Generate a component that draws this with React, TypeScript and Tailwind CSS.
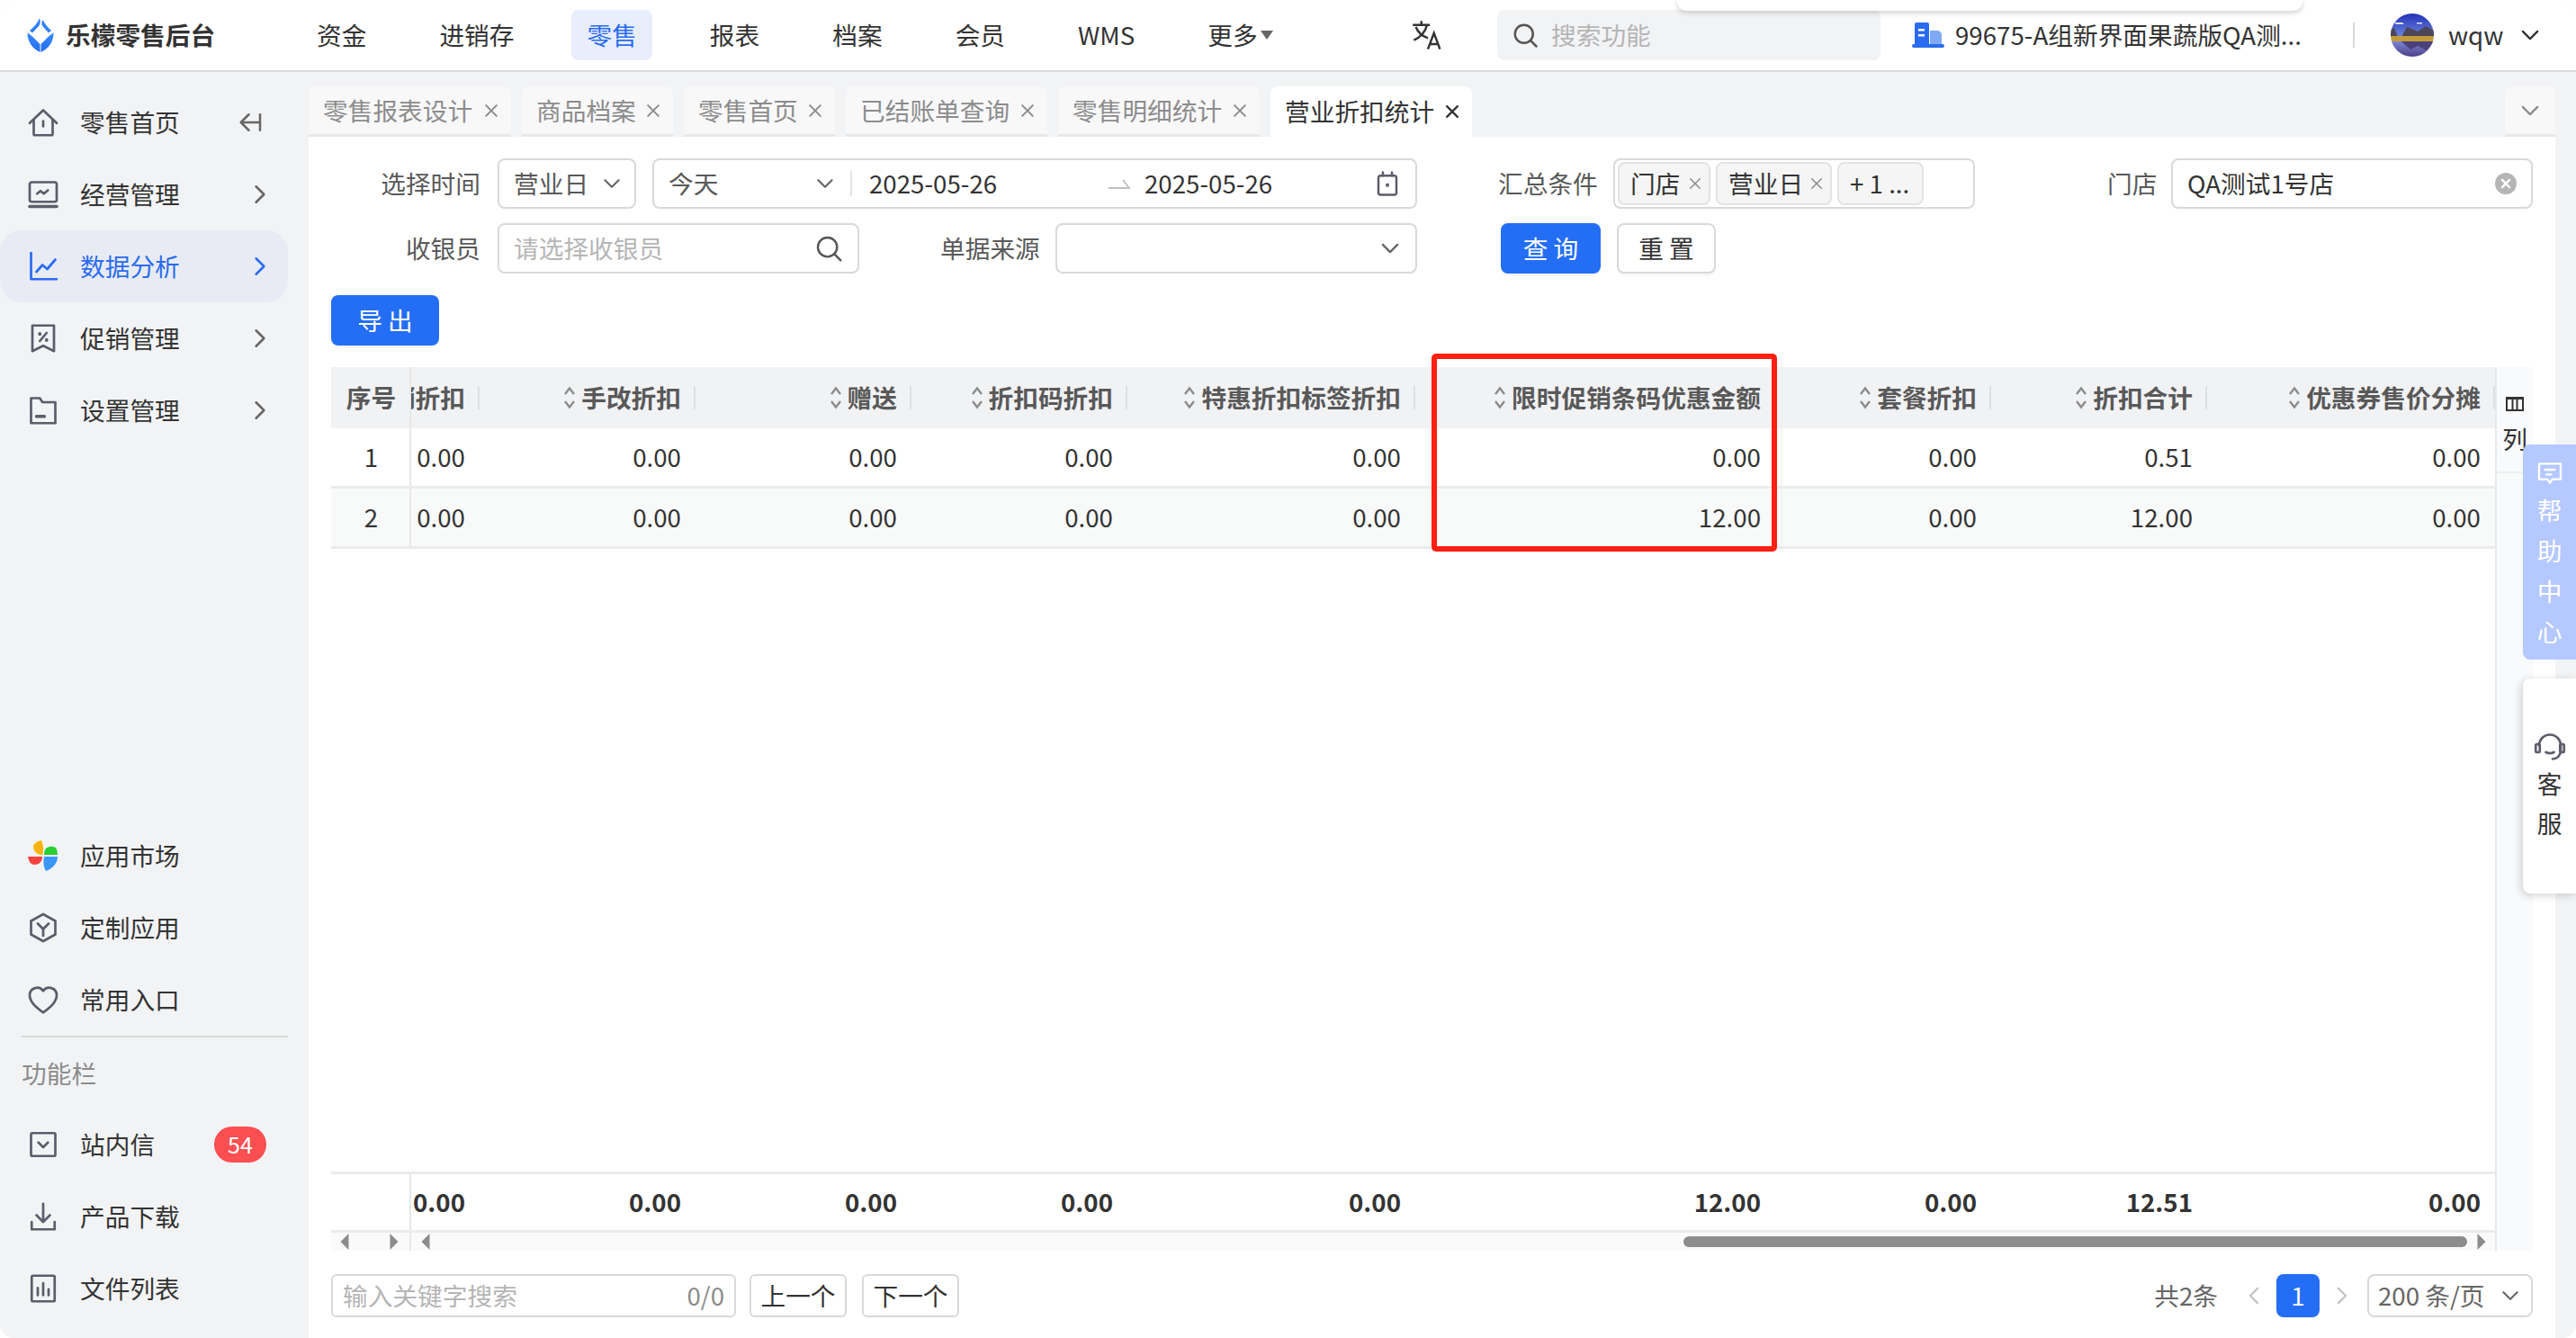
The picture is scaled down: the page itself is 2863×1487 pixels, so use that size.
import type { ReactNode } from "react";

const gridCols = "grid grid-cols-[89px_76px_240px_240px_240px_320px_400px_240px_240px_320px]";

const navItems = ["资金", "进销存", "零售", "报表", "档案", "会员", "WMS"];
const tabs = [
  { label: "零售报表设计", width: "w-[225px]" },
  { label: "商品档案", width: "w-[168px]" },
  { label: "零售首页", width: "w-[168px]" },
  { label: "已结账单查询", width: "w-[224px]" },
  { label: "零售明细统计", width: "w-[224px]" },
];
const columns = ["促销折扣", "手改折扣", "赠送", "折扣码折扣", "特惠折扣标签折扣", "限时促销条码优惠金额", "套餐折扣", "折扣合计", "优惠券售价分摊"];
const rows = [
  ["1", "0.00", "0.00", "0.00", "0.00", "0.00", "0.00", "0.00", "0.51", "0.00"],
  ["2", "0.00", "0.00", "0.00", "0.00", "0.00", "12.00", "0.00", "12.00", "0.00"],
];
const totals = ["0.00", "0.00", "0.00", "0.00", "0.00", "12.00", "0.00", "12.51", "0.00"];

function Icon({ children, className = "h-9 w-9 text-[#5c5c6b]", width = 1.8 }: { children: ReactNode; className?: string; width?: number }) {
  return (
    <svg viewBox="0 0 24 24" fill="none" stroke="currentColor" strokeWidth={width} strokeLinecap="round" strokeLinejoin="round" className={className}>
      {children}
    </svg>
  );
}

function Chevron({ className = "h-7 w-7 text-[#666]", dir = "down" }: { className?: string; dir?: "down" | "right" | "left" }) {
  const d = dir === "down" ? "M5 8.5l7 7 7-7" : dir === "right" ? "M8.5 5l7 7-7 7" : "M15.5 5l-7 7 7 7";
  return (
    <Icon className={className} width={2}>
      <path d={d} />
    </Icon>
  );
}

function Logo() {
  return (
    <svg viewBox="0 0 30 40" className="h-10 w-[30px]">
      <defs>
        <linearGradient id="logoBlue" x1="0" y1="0" x2="0" y2="1">
          <stop offset="0" stopColor="#3d8bff" />
          <stop offset="1" stopColor="#1f6cf0" />
        </linearGradient>
      </defs>
      <path d="M14 1c1 3 1 6-.5 8.500L6 17.500 3 15C8 11 12 6 14 1z" fill="#2f7ff8" />
      <path d="M17.500 3c2 4 5 8 9.500 12l-3 2.500-7-8c-1-2-.5-4.500.500-6.500z" fill="#2f7ff8" />
      <path d="M.5 17c1.500 1.500 3.500 3 6 5l8 8v9C6 35 0 27 .5 17z" fill="url(#logoBlue)" />
      <path d="M29.500 17c-1.500 1.500-3.500 3-6 5l-8 8v9c8.500-4 14.500-12 14-22z" fill="url(#logoBlue)" />
    </svg>
  );
}

function SideRow({ icon, label, right, active }: { icon: ReactNode; label: string; right?: ReactNode; active?: boolean }) {
  return (
    <div className={`flex h-[80px] w-[320px] items-center rounded-[24px] pl-[30px] ${active ? "bg-[#e8ebf4] text-[#2a6cf0]" : "text-[#333]"}`}>
      <div className="flex w-9 justify-center">{icon}</div>
      <span className="ml-[23px]">{label}</span>
      <div className="ml-auto flex items-center pr-[16px]">{right}</div>
    </div>
  );
}

function Sidebar() {
  const arrow = <Chevron dir="right" className="h-[30px] w-[30px] text-[#666]" />;
  return (
    <aside className="flex w-[343px] shrink-0 flex-col pt-[16px] pb-[15px]">
      <SideRow
        label="零售首页"
        icon={<Icon><path d="M2 12.5L12 3l10 9.5" /><path d="M5 10v10.5a1 1 0 0 0 1 1h12a1 1 0 0 0 1-1V10" /><path d="M12 11v4" /></Icon>}
        right={<Icon className="mr-[10px] h-[30px] w-[30px] text-[#666]" width={2}><path d="M20 12H4" /><path d="M10 5l-7 7 7 7" /><path d="M20 5v14" /></Icon>}
      />
      <SideRow
        label="经营管理"
        icon={<Icon><rect x="2" y="3" width="20" height="14.5" rx="1.5" /><path d="M2 21h20" strokeWidth={2.4} /><path d="M7.5 11.5l2.5-2 2.5 2 3-2.5" /></Icon>}
        right={arrow}
      />
      <SideRow
        active
        label="数据分析"
        icon={<Icon className="h-9 w-9 text-[#2a6cf0]"><path d="M3 2v19.5h19" /><path d="M7 16l4.5-5 3.5 3 6-7" /></Icon>}
        right={<Chevron dir="right" className="h-[30px] w-[30px] text-[#2a6cf0]" />}
      />
      <SideRow
        label="促销管理"
        icon={<Icon><path d="M4 2.5h16v19l-8-4-8 4z" /><path d="M14.5 8l-5 6" /><path d="M9.5 8.5v.5M14.5 13v.5" strokeWidth={2.4} /></Icon>}
        right={arrow}
      />
      <SideRow
        label="设置管理"
        icon={<Icon><path d="M3 3h6.5l2 3H21v15.5H3z" /><path d="M7 16.5h6" strokeWidth={2.2} /></Icon>}
        right={arrow}
      />

      <div className="mt-auto">
        <SideRow
          label="应用市场"
          icon={
            <svg viewBox="0 0 34 34" className="h-[34px] w-[34px]">
              <path d="M16 16C9 16 6 11 6 7c0-3 4-6 9-7 2 5 3 10 1 16z" fill="#fbb40d" />
              <path d="M18 16c0-6 3-10 10-9 3 0 5 3 5 9z" fill="#27cf35" />
              <path d="M16 18c0 6-4 9-9 9-4 0-6-4-7-9z" fill="#f6423f" />
              <path d="M18 18h15c0 7-5 13-13 16-3-5-3-10-2-16z" fill="#3b96fb" />
            </svg>
          }
        />
        <SideRow label="定制应用" icon={<Icon><path d="M12 2l9 5v10l-9 5-9-5V7z" /><path d="M8 9l4 4 4-4" /><path d="M12 13v5" /></Icon>} />
        <SideRow label="常用入口" icon={<Icon><path d="M12 21.5C6 17 2 13.5 2 8.5A5.5 5.5 0 0 1 12 5.5a5.5 5.5 0 0 1 10 3c0 5-4 8.500-10 13z" /></Icon>} />
        <div className="ml-[24px] h-[2px] w-[296px] bg-[#d9d9d9]" />
        <div className="flex h-[79px] items-center pl-[24px] text-[#8c8c8c]">功能栏</div>
        <SideRow
          label="站内信"
          icon={<Icon><rect x="3" y="3.500" width="18" height="17" rx="1" /><path d="M8.500 10.500l3.500 3.500 3.500-3.500" /></Icon>}
          right={<span className="mr-[8px] flex h-[40px] w-[58px] items-center justify-center rounded-[20px] bg-[#fb4f52] text-[25px] text-white">54</span>}
        />
        <SideRow label="产品下载" icon={<Icon><path d="M12 2.500v13" /><path d="M7 11l5 5 5-5" /><path d="M3.500 16v5.500h17V16" /></Icon>} />
        <SideRow label="文件列表" icon={<Icon><rect x="3.500" y="2.500" width="17" height="19" rx="1" /><path d="M8 11.500V17M12 8v9M16 12.500V17" /></Icon>} />
      </div>
    </aside>
  );
}

function Avatar() {
  return (
    <svg viewBox="0 0 48 48" className="ml-[40px] h-[48px] w-[48px] shrink-0 rounded-full">
      <defs>
        <linearGradient id="sky" x1="0" y1="0" x2="0" y2="1">
          <stop offset="0" stopColor="#2330b8" />
          <stop offset="1" stopColor="#6d86dc" />
        </linearGradient>
        <linearGradient id="lake" x1="0" y1="0" x2="0" y2="1">
          <stop offset="0" stopColor="#7b85d8" />
          <stop offset="1" stopColor="#4d3f85" />
        </linearGradient>
      </defs>
      <rect width="48" height="26" fill="url(#sky)" />
      <path d="M4 10h9l2 2H6zM29 10h6v1.500h-6z" fill="#dfe4fa" />
      <path d="M0 18l4-2 4 10H0zM12 26l6-11 8 3 4 2 9-6 9 5v7z" fill="#4c4656" />
      <rect y="25" width="48" height="6" fill="#c49b3c" />
      <rect y="31" width="48" height="17" fill="url(#lake)" />
      <path d="M12 31l10 9 8-4 10 5 8-10z" fill="#4a4178" />
    </svg>
  );
}

function Header() {
  return (
    <header className="flex h-[80px] shrink-0 items-center border-b-2 border-[#d9d9d9] bg-white">
      <div className="flex w-[335px] shrink-0 items-center pl-[30px]">
        <Logo />
        <span className="ml-[13px] font-bold text-[#333]">乐檬零售后台</span>
      </div>
      <nav className="flex w-[1233px] shrink-0 items-center gap-[47px]">
        {navItems.map((n) => (
          <span key={n} className={`flex h-[56px] items-center rounded-[8px] px-[17px] ${n === "零售" ? "bg-[#e8eefc] text-[#2a6cf0]" : "text-[#333]"}`}>
            {n}
          </span>
        ))}
        <span className="flex h-[56px] items-center px-[17px] text-[#333]">
          更多
          <svg viewBox="0 0 14 10" className="ml-[3px] h-[10px] w-[14px]"><path d="M0 0h14L7 10z" fill="#666" /></svg>
        </span>
      </nav>
      <svg viewBox="0 0 34 34" fill="none" stroke="#333" strokeWidth="2.2" className="h-[38px] w-[38px] shrink-0">
        <path d="M2 7h17M10.500 3v4M16 7c-1 6-6 12-13 15M5 9c2 5 6 9 12 11" />
        <path d="M17 31l6-16 6 16M19 26h8" />
      </svg>
      <div className="ml-[58px] flex h-[56px] w-[426px] shrink-0 items-center rounded-[8px] bg-[#f2f3f5] pl-[16px] text-[#b5b5b5]">
        <Icon className="h-[30px] w-[30px] text-[#555]" width={2}><circle cx="11" cy="11" r="8" /><path d="M17 17l5 5" /></Icon>
        <span className="ml-[14px]">搜索功能</span>
      </div>
      <svg viewBox="0 0 36 28" className="ml-[35px] h-[28px] w-[36px] shrink-0">
        <path d="M5 0h12a2 2 0 0 1 2 2v22H3V2a2 2 0 0 1 2-2z" fill="#2a6cf0" />
        <path d="M20 9h8a5 5 0 0 1 5 5v10H20z" fill="#7fa8f5" />
        <rect x="0" y="24" width="36" height="4" rx="2" fill="#2a6cf0" />
        <rect x="7" y="7" width="7" height="2.500" fill="#fff" />
        <rect x="7" y="13" width="7" height="2.500" fill="#fff" />
      </svg>
      <span className="ml-[12px] w-[390px] shrink-0 whitespace-nowrap text-[#333]">99675-A组新界面果蔬版QA测...</span>
      <div className="ml-[52px] h-[28px] w-[2px] shrink-0 bg-[#d9d9d9]" />
      <Avatar />
      <span className="ml-[16px] text-[#333]">wqw</span>
      <Chevron className="ml-[16px] h-[28px] w-[28px] text-[#333]" />
    </header>
  );
}

function Tabs() {
  return (
    <div className="mt-[16px] flex h-[56px] shrink-0 items-stretch gap-[12px] pr-[23px]">
      {tabs.map((t) => (
        <div key={t.label} className={`flex items-center justify-between rounded-t-[8px] border-b-[3px] border-[#e7e8ea] bg-[#f8f8f9] pl-[16px] pr-[12px] text-[#8c8c8c] ${t.width}`}>
          {t.label}
          <Icon className="h-[20px] w-[20px] text-[#8c8c8c]" width={2.4}><path d="M5 5l14 14M19 5L5 19" /></Icon>
        </div>
      ))}
      <div className="flex w-[224px] items-center justify-between rounded-t-[8px] bg-white pl-[16px] pr-[12px] text-[#333]">
        营业折扣统计
        <Icon className="h-[20px] w-[20px] text-[#333]" width={2.8}><path d="M5 5l14 14M19 5L5 19" /></Icon>
      </div>
      <div className="ml-auto flex w-[56px] items-center justify-center rounded-t-[8px] border-b-[3px] border-[#e7e8ea] bg-[#f8f8f9]">
        <Chevron className="h-[28px] w-[28px] text-[#8c8c8c]" />
      </div>
    </div>
  );
}

function Box({ className = "", children }: { className?: string; children?: ReactNode }) {
  return <div className={`flex h-[56px] shrink-0 items-center rounded-[8px] border-2 border-[#d9d9d9] bg-white ${className}`}>{children}</div>;
}

function Tag({ label, closable = true, className = "" }: { label: string; closable?: boolean; className?: string }) {
  return (
    <span className={`flex h-[48px] shrink-0 items-center justify-between rounded-[8px] border-2 border-[#e3e3e3] bg-[#f5f5f5] pl-[12px] pr-[6px] text-[#333] ${className}`}>
      {label}
      {closable && <Icon className="h-[18px] w-[18px] text-[#8c8c8c]" width={2}><path d="M5 5l14 14M19 5L5 19" /></Icon>}
    </span>
  );
}

function Filters() {
  const label = "shrink-0 text-[#595959]";
  return (
    <div className="flex shrink-0 flex-col">
      <div className="flex h-[56px] items-center">
        <span className={`${label} mr-[19px] w-[191px] text-right`}>选择时间</span>
        <Box className="w-[154px] justify-between pl-[16px] pr-[12px] text-[#595959]">
          营业日
          <Chevron className="h-[26px] w-[26px] text-[#666]" />
        </Box>
        <Box className="ml-[18px] w-[850px] pl-[16px] text-[#333]">
          <span className="w-[161px] shrink-0 text-[#595959]">今天</span>
          <Chevron className="h-[26px] w-[26px] shrink-0 text-[#666]" />
          <div className="ml-[15px] h-[28px] w-[2px] shrink-0 bg-[#e3e3e3]" />
          <span className="ml-[19px] w-[142px] shrink-0 whitespace-nowrap">2025-05-26</span>
          <svg viewBox="0 0 26 14" fill="none" stroke="#c0c0c0" strokeWidth="2" className="ml-[123px] h-[14px] w-[26px] shrink-0"><path d="M1 12h23l-7-9" /></svg>
          <span className="ml-[15px] w-[142px] shrink-0 whitespace-nowrap">2025-05-26</span>
          <Icon className="ml-auto mr-[16px] h-[30px] w-[30px] text-[#5c5c6b]" width={2}><rect x="4" y="5" width="16" height="17" rx="2" /><path d="M8 2v3M16 2v3" /><path d="M12 13v.5" strokeWidth={3} /></Icon>
        </Box>
        <span className={`${label} ml-[90px] w-[110px] whitespace-nowrap`}>汇总条件</span>
        <Box className="ml-[18px] w-[402px] gap-[6px] pl-[3px]">
          <Tag label="门店" className="w-[103px]" />
          <Tag label="营业日" className="w-[129px]" />
          <Tag label="+ 1 ..." closable={false} className="w-[96px]" />
        </Box>
        <span className={`${label} ml-[147px] w-[52px] whitespace-nowrap`}>门店</span>
        <Box className="ml-[19px] w-[402px] justify-between pl-[16px] pr-[16px] text-[#333]">
          QA测试1号店
          <span className="flex h-[24px] w-[24px] items-center justify-center rounded-full bg-[#b5b5b5]">
            <Icon className="h-[14px] w-[14px] text-white" width={4}><path d="M5 5l14 14M19 5L5 19" /></Icon>
          </span>
        </Box>
      </div>
      <div className="mt-[16px] flex h-[56px] items-center">
        <span className={`${label} mr-[19px] w-[191px] text-right`}>收银员</span>
        <Box className="w-[402px] justify-between pl-[16px] pr-[16px] text-[#b5b5b5]">
          请选择收银员
          <Icon className="h-[32px] w-[32px] text-[#555]" width={1.8}><circle cx="11" cy="11" r="8" /><path d="M17 17l5 5" /></Icon>
        </Box>
        <span className={`${label} ml-[90px] w-[110px] whitespace-nowrap`}>单据来源</span>
        <Box className="ml-[18px] w-[402px] justify-end pr-[14px]">
          <Chevron className="h-[28px] w-[28px] text-[#666]" />
        </Box>
        <button className="ml-[93px] h-[56px] w-[111px] shrink-0 rounded-[8px] bg-[#246ef5] text-white shadow-[0_3px_0_rgba(0,0,0,0.03)]">查 询</button>
        <button className="ml-[18px] h-[56px] w-[110px] shrink-0 rounded-[8px] border-2 border-[#d9d9d9] bg-white text-[#333] shadow-[0_3px_0_rgba(0,0,0,0.03)]">重 置</button>
      </div>
      <button className="mt-[24px] ml-[25px] h-[56px] w-[120px] rounded-[8px] bg-[#246ef5] text-white shadow-[0_3px_0_rgba(0,0,0,0.03)]">导 出</button>
    </div>
  );
}

function SortIcon() {
  return (
    <svg viewBox="0 0 14 26" fill="none" stroke="#8c8c8c" strokeWidth="2.4" className="mr-[6px] h-[26px] w-[14px] shrink-0">
      <path d="M2 9l5-6.500 5 6.500" />
      <path d="M2 17l5 6.500 5-6.500" />
    </svg>
  );
}

function DataTable() {
  return (
    <div className="relative mt-[24px] ml-[25px] flex h-[982px] w-[2447px] shrink-0">
      <div className="flex w-[2405px] shrink-0 flex-col">
        <div className={`${gridCols} h-[68px] shrink-0 bg-[#f1f2f4] font-bold text-[#595959]`}>
          <div className="flex items-center justify-center border-r-2 border-[#e8e8e8] pl-[2px]">序号</div>
          {columns.map((c, i) => (
            <div key={c} className="flex items-center justify-end overflow-hidden whitespace-nowrap">
              {i > 0 && <SortIcon />}
              <span>{c}</span>
              <span className="ml-[14px] h-[26px] w-[2px] shrink-0 bg-[#dedfe1]" />
            </div>
          ))}
        </div>
        {rows.map((r, ri) => (
          <div key={r[0]} className={`${gridCols} h-[67px] shrink-0 border-b-[3px] border-[#ebebeb] ${ri === 1 ? "bg-[#f8f9f9]" : "bg-white"} text-[#333]`}>
            <div className="flex items-center justify-center border-r-2 border-[#e8e8e8] pl-[2px]">{r[0]}</div>
            {r.slice(1).map((v, i) => (
              <div key={i} className="flex items-center justify-end pr-[16px]">{v}</div>
            ))}
          </div>
        ))}
        <div className="flex-1" />
        <div className={`${gridCols} h-[68px] shrink-0 border-y-[3px] border-[#ebebeb] font-bold text-[#333]`}>
          <div className="border-r-2 border-[#e8e8e8]" />
          {totals.map((v, i) => (
            <div key={i} className="flex items-center justify-end pr-[16px]">{v}</div>
          ))}
        </div>
        <div className="flex h-[20px] shrink-0 items-center bg-[#fafafa]">
          <div className="flex h-full w-[89px] items-center justify-between border-r-2 border-[#e8e8e8] pl-[10px] pr-[12px]">
            <svg viewBox="0 0 10 20" className="h-[18px] w-[10px]"><path d="M10 0v20L0 10z" fill="#8c8c8c" /></svg>
            <svg viewBox="0 0 10 20" className="h-[18px] w-[10px]"><path d="M0 0v20l10-10z" fill="#8c8c8c" /></svg>
          </div>
          <svg viewBox="0 0 10 20" className="ml-[11px] h-[18px] w-[10px]"><path d="M10 0v20L0 10z" fill="#8c8c8c" /></svg>
          <div className="ml-[1393px] h-[12px] w-[871px] rounded-[6px] bg-[#8c8c8c]" />
          <svg viewBox="0 0 10 20" className="ml-[11px] h-[18px] w-[10px]"><path d="M0 0v20l10-10z" fill="#8c8c8c" /></svg>
        </div>
      </div>
      <div className="flex h-[982px] w-[42px] shrink-0 flex-col border-l-2 border-[#e8e8e8] bg-[#f9fafc]">
        <div className="flex h-[118px] shrink-0 flex-col items-center border-b-2 border-[#eeeeee] pt-[33px] text-[#333]">
          <svg viewBox="0 0 20 16" className="h-[16px] w-[20px] shrink-0">
            <rect x="1" y="1" width="18" height="14" fill="none" stroke="#333" strokeWidth="2" />
            <rect x="0" y="0" width="20" height="3" fill="#333" />
            <path d="M7.500 1v14M12.500 1v14" stroke="#333" strokeWidth="2" />
          </svg>
          <span className="mt-[14px] leading-[32px]">列</span>
        </div>
      </div>
      <div className="absolute left-[1223px] -top-[15px] h-[220px] w-[384px] rounded-[5px] border-[6px] border-[#ff2012]" />
    </div>
  );
}

function Pager() {
  return (
    <div className="mt-[26px] ml-[25px] flex h-[48px] w-[2447px] shrink-0 items-center">
      <div className="flex h-[48px] w-[450px] items-center justify-between rounded-[6px] border-2 border-[#d9d9d9] px-[11px] text-[#b5b5b5]">
        输入关键字搜索
        <span className="text-[#8c8c8c]">0/0</span>
      </div>
      <button className="ml-[15px] h-[48px] w-[108px] rounded-[6px] border-2 border-[#d9d9d9] text-[#333]">上一个</button>
      <button className="ml-[17px] h-[48px] w-[108px] rounded-[6px] border-2 border-[#d9d9d9] text-[#333]">下一个</button>
      <span className="ml-auto text-[#666]">共2条</span>
      <Chevron dir="left" className="ml-[26px] h-[28px] w-[28px] text-[#c4c4c4]" />
      <span className="ml-[11px] flex h-[48px] w-[48px] items-center justify-center rounded-[8px] bg-[#246ef5] text-white">1</span>
      <Chevron dir="right" className="ml-[11px] h-[28px] w-[28px] text-[#c4c4c4]" />
      <div className="ml-[14px] flex h-[48px] w-[184px] items-center justify-between rounded-[8px] border-2 border-[#d9d9d9] pl-[10px] pr-[10px] text-[#666]">
        200 条/页
        <Chevron className="h-[26px] w-[26px] text-[#666]" />
      </div>
    </div>
  );
}

export default function App() {
  return (
    <div className="relative flex h-screen w-full flex-col overflow-hidden rounded-[16px] bg-[#f2f3f5] font-['Noto_Sans_CJK_SC',sans-serif] text-[27.7px]">
      <Header />
      <div className="flex min-h-0 flex-1">
        <Sidebar />
        <main className="flex min-w-0 flex-1 flex-col">
          <Tabs />
          <div className="mr-[23px] flex flex-1 flex-col bg-white pt-[24px]">
            <Filters />
            <DataTable />
            <Pager />
          </div>
        </main>
      </div>

      <div className="absolute left-[1864px] top-0 h-[12px] w-[695px] rounded-b-[10px] bg-white shadow-[0_2px_6px_rgba(0,0,0,0.2)]" />

      <div className="absolute right-0 top-[494px] flex h-[239px] w-[59px] flex-col items-center rounded-l-[8px] bg-[#b5c8ff] pt-[16px] leading-[45px] text-white">
        <Icon className="mb-[2px] h-[32px] w-[32px] text-white" width={1.8}><path d="M3 4h18v13h-7l-2 3-2-3H3z" /><path d="M8 9h8M9 13h4" /></Icon>
        <span>帮</span>
        <span>助</span>
        <span>中</span>
        <span>心</span>
      </div>
      <div className="absolute right-0 top-[754px] flex h-[239px] w-[59px] flex-col items-center rounded-l-[8px] bg-white pt-[58px] leading-[44px] text-[#333] shadow-[-2px_2px_10px_rgba(0,0,0,0.18)]">
        <Icon className="h-[36px] w-[36px] text-[#5c5c6b]" width={1.8}><path d="M4 11a8 8 0 0 1 16 0v4a6 6 0 0 1-6 6" /><rect x="1.500" y="10" width="3" height="6" rx="1" /><rect x="19.500" y="10" width="3" height="6" rx="1" /><path d="M9 16c2 1 4 1 6 0" /></Icon>
        <span>客</span>
        <span>服</span>
      </div>
    </div>
  );
}
